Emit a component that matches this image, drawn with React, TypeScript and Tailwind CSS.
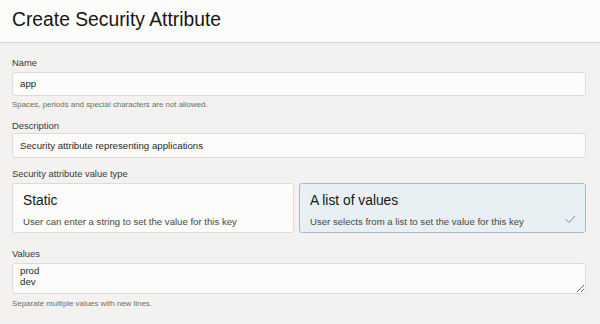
import React from "react";

const font = { fontFamily: '"Liberation Sans", Arial, sans-serif' };

function Label({ children }: { children: React.ReactNode }) {
  return <div className="text-[9.4px] leading-[12px] text-[#3a3836]">{children}</div>;
}

function Help({ children }: { children: React.ReactNode }) {
  return <div className="text-[7.9px] leading-[10px] text-[#6f6c69]">{children}</div>;
}

function TypeCard({
  title,
  text,
  selected,
}: {
  title: string;
  text: string;
  selected?: boolean;
}) {
  return (
    <div
      className={
        selected
          ? "relative h-[50px] rounded-[3px] border border-[#a9bccb] bg-[#e8f0f4] pl-[10px] pt-[8px]"
          : "relative h-[50px] rounded-[3px] border border-[#dddad7] bg-[#fcfcfb] pl-[10px] pt-[8px]"
      }
    >
      <div className="text-[13.8px] leading-[18px] text-[#161513]">{title}</div>
      <div className="mt-[6px] text-[9.6px] leading-[12px] text-[#4a4845]">{text}</div>
      {selected && (
        <svg
          className="absolute right-[9px] top-[31px]"
          width="11"
          height="9"
          viewBox="0 0 11 9"
          fill="none"
        >
          <path d="M1 4.5 L4 7.5 L10 1" stroke="#6c8aa0" strokeWidth="1" />
        </svg>
      )}
    </div>
  );
}

export default function App() {
  return (
    <div className="w-[600px] h-[324px] overflow-hidden bg-[#f3f2f0]" style={font}>
      <div className="h-[43px] border-b border-[#d9d6d3] bg-[#fcfcfb] pl-[12px] pt-[8px]">
        <h1 className="text-[19.3px] leading-[24px] text-[#161513]">Create Security Attribute</h1>
      </div>

      <div className="px-[12px] w-[598px]">
        <div className="mt-[14px]">
          <Label>Name</Label>
        </div>
        <div className="mt-[3px] h-[24px] rounded-[3px] border border-[#dddad7] bg-[#fcfcfb] pl-[7px] text-[9.7px] leading-[22px] text-[#2b2927]">
          app
        </div>
        <div className="mt-[4px]">
          <Help>Spaces, periods and special characters are not allowed.</Help>
        </div>

        <div className="mt-[10px]">
          <Label>Description</Label>
        </div>
        <div className="mt-[1px] h-[25px] rounded-[3px] border border-[#dddad7] bg-[#fcfcfb] pl-[7px] text-[9.7px] leading-[23px] text-[#2b2927]">
          Security attribute representing applications
        </div>

        <div className="mt-[10px]">
          <Label>Security attribute value type</Label>
        </div>
        <div className="mt-[3px] flex gap-[5px]">
          <div className="w-[282px]">
            <TypeCard title="Static" text="User can enter a string to set the value for this key" />
          </div>
          <div className="flex-1">
            <TypeCard
              title="A list of values"
              text="User selects from a list to set the value for this key"
              selected
            />
          </div>
        </div>

        <div className="mt-[15px]">
          <Label>Values</Label>
        </div>
        <textarea
          readOnly
          spellCheck={false}
          value={"prod\ndev"}
          className="mt-[3px] block h-[31px] w-full rounded-[3px] border border-[#dddad7] bg-[#fcfcfb] px-[7px] pt-[1px] text-[9.7px] leading-[11px] text-[#2b2927] outline-none"
          style={font}
        />
        <div className="mt-[5px]">
          <Help>Separate multiple values with new lines.</Help>
        </div>
      </div>
    </div>
  );
}
